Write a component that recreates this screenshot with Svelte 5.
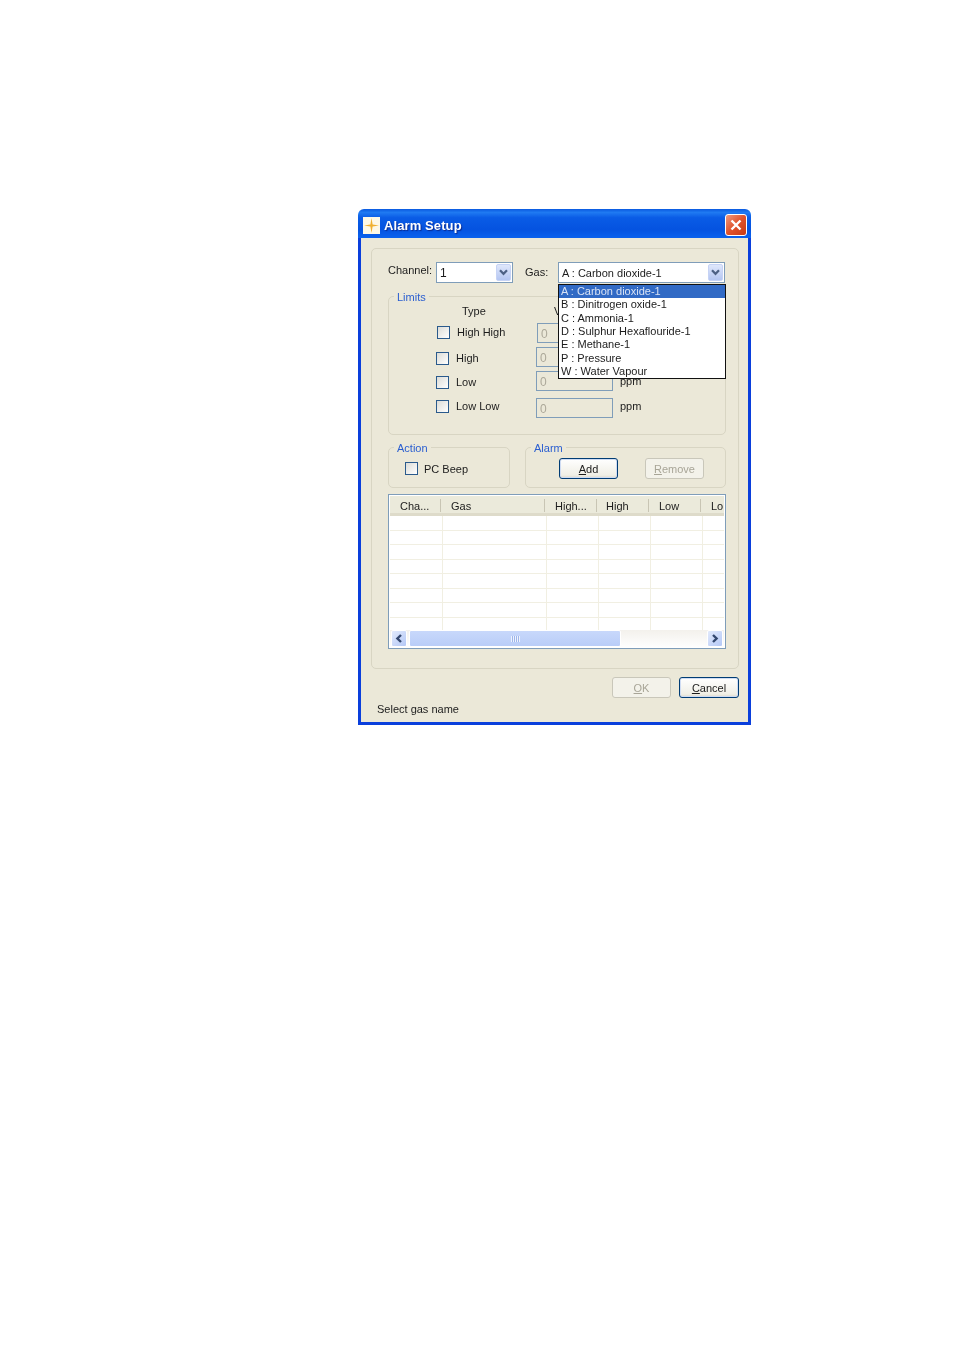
<script>
  const gases = ['A : Carbon dioxide-1','B : Dinitrogen oxide-1','C : Ammonia-1','D : Sulphur Hexaflouride-1','E : Methane-1','P : Pressure','W : Water Vapour'];
  const limits = [{ n: 'High High', c: 'r1' }, { n: 'High', c: 'r2' }, { n: 'Low', c: 'r3' }, { n: 'Low Low', c: 'r4' }];
  const cols = [
    { t: 'Cha...', c: 'c1' }, { t: 'Gas', c: 'c2' }, { t: 'High...', c: 'c3' },
    { t: 'High', c: 'c4' }, { t: 'Low', c: 'c5' }, { t: 'Lo', c: 'c6' }
  ];
  const rows = Array.from({ length: 8 }, (_, i) => i);
</script>

{#snippet chevron()}
  <svg width="9" height="7" viewBox="0 0 9 7"><path d="M1 1.2 4.5 4.8 8 1.2" fill="none" stroke="#4d6185" stroke-width="2.2"/></svg>
{/snippet}

<div class="win">
  <header class="title">
    <svg class="appicon" width="17" height="17" viewBox="0 0 17 17">
      <rect width="17" height="17" fill="#fdf8e6"/>
      <path d="M8.5 1 9.6 7.4 16 8.5 9.6 9.6 8.5 16 7.4 9.6 1 8.5 7.4 7.4Z" fill="#f0b030"/>
    </svg>
    <span class="caption">Alarm Setup</span>
    <button class="close" aria-label="Close">
      <svg width="12" height="12" viewBox="0 0 12 12"><path d="M1.5 1.5 10.5 10.5M10.5 1.5 1.5 10.5" stroke="#fff" stroke-width="2.4"/></svg>
    </button>
  </header>

  <div class="client">
    <div class="panel">
      <div class="toprow">
        <span class="lab-channel">Channel:</span>
        <div class="combo channel">
          <span class="val">1</span>
          <span class="arrow">{@render chevron()}</span>
        </div>
        <span class="lab-gas">Gas:</span>
        <div class="combo gas">
          <span class="val">A : Carbon dioxide-1</span>
          <span class="arrow">{@render chevron()}</span>
          <ul class="drop">
            {#each gases as g, i}
              <li class:sel={i === 0}>{g}</li>
            {/each}
          </ul>
        </div>
      </div>

      <section class="group limits">
        <span class="legend">Limits</span>
        <div class="heads"><span class="h-type">Type</span><span class="h-value">Value</span></div>
        {#each limits as l}
          <div class="lrow {l.c}">
            <span class="check"></span>
            <span class="lname">{l.n}</span>
            <span class="field">0</span>
            <span class="ppm">ppm</span>
          </div>
        {/each}
      </section>

      <div class="grouprow">
        <section class="group action">
          <span class="legend">Action</span>
          <span class="check"></span>
          <span class="beep">PC Beep</span>
        </section>
        <section class="group alarm">
          <span class="legend">Alarm</span>
          <button class="btn default add"><u>A</u>dd</button>
          <button class="btn off remove" disabled><u>R</u>emove</button>
        </section>
      </div>

      <div class="list">
        <div class="thead">
          {#each cols as c}
            <span class="th {c.c}">{c.t}</span>
          {/each}
        </div>
        <div class="tbody">
          {#each rows as r (r)}
            <div class="tr">
              {#each cols as c}
                <span class="td {c.c}"></span>
              {/each}
            </div>
          {/each}
        </div>
        <div class="hscroll">
          <span class="sbtn">
            <svg width="8" height="9" viewBox="0 0 8 9"><path d="M6 1 2.4 4.5 6 8" fill="none" stroke="#34486f" stroke-width="2.4"/></svg>
          </span>
          <span class="thumb"><span class="grip"></span></span>
          <span class="sbtn right">
            <svg width="8" height="9" viewBox="0 0 8 9"><path d="M2 1 5.6 4.5 2 8" fill="none" stroke="#34486f" stroke-width="2.4"/></svg>
          </span>
        </div>
      </div>
    </div>

    <div class="actions">
      <button class="btn off ok" disabled><u>O</u>K</button>
      <button class="btn default cancel"><u>C</u>ancel</button>
    </div>
    <div class="status">Select gas name</div>
  </div>
</div>

<style>
  :global(body) { margin: 0; background: #fff; }
  * { box-sizing: border-box; }
  .win {
    width: 393px; height: 516px; margin: 209px 0 0 358px;
    font: 11px/16px "Liberation Sans", Arial, sans-serif; color: #1c1c1c;
    display: flex; flex-direction: column;
    filter: blur(0.35px);
  }
  .title {
    height: 29px; flex: none; display: flex; align-items: center;
    padding: 3px 4px 0 5px; border-radius: 6px 6px 0 0;
    background: linear-gradient(#0a5ae0 0, #1f7af2 12%, #0a5ce6 30%, #0553e0 70%, #0a62ee 100%);
  }
  .appicon { flex: none; }
  .caption {
    margin-left: 4px; padding-top: 1px; color: #fff; font-weight: 700; font-size: 13px;
    letter-spacing: 0.1px; text-shadow: 1px 1px 1px #0a2a90;
  }
  .close {
    margin-left: auto; width: 22px; height: 22px; padding: 0; border: 1px solid #fff; border-radius: 3px;
    background: linear-gradient(135deg, #ee9a80, #e0532c 50%, #c93a14);
    display: flex; align-items: center; justify-content: center;
  }
  .client {
    flex: 1; background: #ebe8d8; border: solid #0a3fdc; border-width: 0 3px 3px;
    padding: 10px 9px 0 10px; min-height: 0;
  }
  .panel {
    height: 421px; border: 1px solid #d8d5c3; border-radius: 5px;
    padding: 13px 12px 0 16px; display: flex; flex-direction: column;
  }
  .toprow { height: 21px; display: flex; align-items: center; flex: none; }
  .lab-channel { width: 48px; margin-top: -6px; }
  .lab-gas { width: 33px; margin-left: 12px; margin-top: -2px; }
  .combo {
    position: relative; height: 21px; border: 1px solid #7f9db9; background: #fff;
    display: flex; align-items: center; justify-content: space-between; padding: 0 1px 0 3px;
  }
  .channel { width: 77px; }
  .channel .val { font-size: 12px; margin-top: 1px; }
  .gas { width: 167px; }
  .arrow {
    width: 15px; height: 17px; border-radius: 2px;
    background: linear-gradient(#dfe7fb, #b4c6f2); border: 1px solid #c6d3f5;
    display: flex; align-items: center; justify-content: center;
  }
  .drop {
    position: absolute; left: -1px; top: 21px; width: 168px; height: 95px; z-index: 5;
    margin: 0; padding: 0; list-style: none; background: #fff; border: 1px solid #111;
    overflow: hidden;
  }
  .drop li { height: 13.35px; line-height: 13px; padding-left: 2px; white-space: nowrap; }
  .drop li.sel { background: #316ac5; color: #d8e2f4; }

  .group { position: relative; border: 1px solid #d8d5c3; border-radius: 5px; }
  .legend {
    position: absolute; left: 5px; top: -7px; padding: 0 3px; background: #ebe8d8;
    color: #2a5ed0; line-height: 14px;
  }
  .limits { height: 139px; margin-top: 13px; flex: none; }
  .heads { height: 26px; position: relative; display: flex; padding-top: 6px; }
  .h-type { margin-left: 73px; width: 92px; }
  .lrow { display: flex; align-items: center; height: 20px; margin-top: 4px; padding-left: 47px; }
  .lrow.r1 { margin-top: 0; padding-left: 48px; }
  .lrow.r4 { margin-top: 7px; }
  .check {
    flex: none; width: 13px; height: 13px; border: 1px solid #2a5a8c;
    background: linear-gradient(135deg, #dcdcd7, #fff);
  }
  .lrow.r1 .check, .lrow.r1 .lname { margin-top: -2px; }
  .lrow.r2 .check, .lrow.r2 .lname, .lrow.r3 .check, .lrow.r3 .lname { margin-top: 2px; }
  .lrow.r4 .check, .lrow.r4 .lname { margin-top: -4px; }
  .lname { width: 80px; margin-left: 7px; }
  .field {
    flex: none; width: 77px; height: 20px; border: 1px solid #7f9db9; padding: 2px 3px 0;
    color: #aca899; background: #ebe8d8; font-size: 12px;
  }
  .ppm { margin-left: 7px; }
  .lrow.r4 .ppm { margin-top: -5px; }

  .grouprow { display: flex; gap: 15px; margin-top: 12px; height: 41px; flex: none; }
  .action { width: 122px; display: flex; align-items: center; padding: 2px 0 0 16px; }
  .beep { margin-left: 6px; }
  .alarm { width: 201px; padding-top: 10px; padding-left: 33px; display: flex; align-items: flex-start; gap: 27px; }
  .btn {
    width: 59px; height: 21px; padding: 0; border-radius: 3px; font: inherit; color: #1c1c1c;
    background: linear-gradient(#fff, #f0efe6 85%, #dcd8c8);
  }
  .btn.default { border: 1px solid #003c74; box-shadow: inset 0 0 0 1px #cfdcf3; }
  .btn.off { border: 1px solid #c9c7ba; background: #f3f2ea; color: #a8a597; }
  .cancel { width: 60px; }

  .list {
    margin-top: 6px; height: 155px; flex: none; border: 1px solid #7f9db9; background: #fff;
    padding: 1px; display: flex; flex-direction: column;
  }
  .thead { display: flex; height: 20px; flex: none; background: #ebeadb; border-bottom: 3px solid #dedbca; overflow: hidden; }
  .th { flex: none; position: relative; line-height: 19px; padding-top: 1px; white-space: nowrap; }
  .th:not(.c6)::after {
    content: ""; position: absolute; right: 2px; top: 3px; width: 1px; height: 13px; background: #c8c5b4;
  }
  .c1 { width: 53px; }
  .c2 { width: 104px; }
  .c3, .c4, .c5 { width: 52px; }
  .c6 { width: 21px; }
  .th.c1 { padding-left: 10px; }
  .th.c2, .th.c3, .th.c5, .th.c6 { padding-left: 8px; }
  .th.c4 { padding-left: 7px; }
  .tbody { height: 114px; overflow: hidden; flex: none; }
  .tr { display: flex; height: 14.5px; border-bottom: 1px solid #f1efe2; }
  .td { flex: none; border-right: 1px solid #f1efe2; }
  .td.c6 { border-right: 0; }
  .hscroll {
    height: 17px; flex: none; display: flex; align-items: stretch;
    background: linear-gradient(#f3f1ec, #fefefe);
  }
  .sbtn {
    width: 16px; margin-left: 1px; border: 1px solid #fff; border-radius: 2px;
    background: linear-gradient(135deg, #e2eafc, #b4c8f6);
    display: flex; align-items: center; justify-content: center; flex: none;
  }
  .sbtn.right { margin-left: 86px; }
  .thumb {
    width: 212px; margin-left: 2px; border: 1px solid #fff; border-radius: 2px;
    background: linear-gradient(#c8d8fb, #b9cdf8);
    display: flex; align-items: center; justify-content: center; flex: none;
  }
  .grip { width: 9px; height: 6px; background: repeating-linear-gradient(90deg, #eef3fe 0 1px, #9fb6ea 1px 2px); }

  .actions { display: flex; justify-content: flex-end; gap: 8px; margin-top: 8px; }
  .status { margin: 3px 0 0 6px; }
</style>
